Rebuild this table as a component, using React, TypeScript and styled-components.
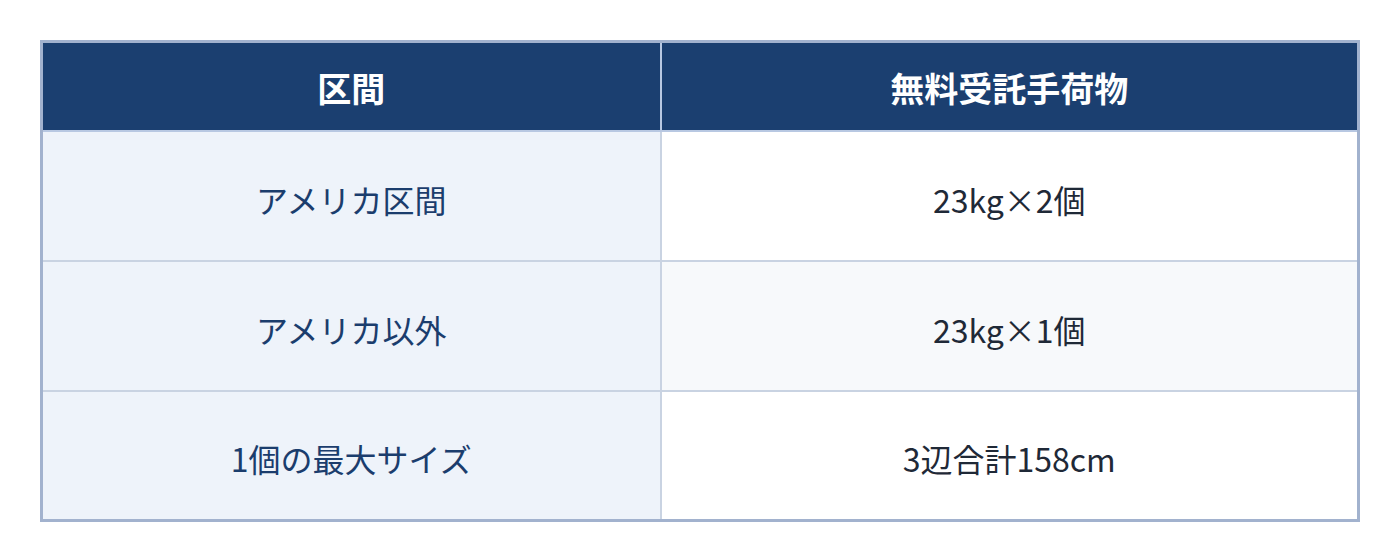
import styled, { createGlobalStyle } from 'styled-components';

const GlobalStyle = createGlobalStyle`
  html, body {
    margin: 0;
    padding: 0;
    background: #ffffff;
  }
  body {
    font-family: "Noto Sans CJK JP", "Noto Sans", sans-serif;
  }
`;

const Page = styled.div`
  padding: 40px;
`;

const Table = styled.table`
  width: 1320px;
  border-collapse: collapse;
  border: 3px solid #a2b2ce;
  table-layout: fixed;
`;

const HeadCell = styled.th`
  background: #1b3f70;
  color: #ffffff;
  font-weight: 700;
  font-size: 34px;
  height: 89px;
  padding: 2px 0 0;
  box-sizing: border-box;
  text-align: center;
  border-left: 2px solid #b8c8e2;
  border-bottom: 2px solid #b8c8e2;
  &:first-child {
    border-left: none;
  }
`;

const LabelCell = styled.td`
  background: #eef3fa;
  color: #1b3d6d;
  font-size: 32px;
  text-align: center;
  height: 130px;
  padding: 6px 0 0;
  box-sizing: border-box;
  border-top: 2px solid #c9d3e2;
`;

const ValueCell = styled.td<{ $alt?: boolean }>`
  background: ${p => (p.$alt ? '#f7f9fb' : '#ffffff')};
  color: #1f2937;
  font-size: 32px;
  text-align: center;
  padding: 6px 0 0;
  border-top: 2px solid #c9d3e2;
  border-left: 2px solid #c9d3e2;
`;

const rows = [
  { label: 'アメリカ区間', value: '23kg×2個' },
  { label: 'アメリカ以外', value: '23kg×1個' },
  { label: '1個の最大サイズ', value: '3辺合計158cm' },
];

export default function App() {
  return (
    <>
      <GlobalStyle />
      <Page>
        <Table>
          <colgroup>
            <col style={{ width: 619 }} />
            <col />
          </colgroup>
          <thead>
            <tr>
              <HeadCell>区間</HeadCell>
              <HeadCell>無料受託手荷物</HeadCell>
            </tr>
          </thead>
          <tbody>
            {rows.map((r, i) => (
              <tr key={r.label}>
                <LabelCell>{r.label}</LabelCell>
                <ValueCell $alt={i % 2 === 1}>{r.value}</ValueCell>
              </tr>
            ))}
          </tbody>
        </Table>
      </Page>
    </>
  );
}
